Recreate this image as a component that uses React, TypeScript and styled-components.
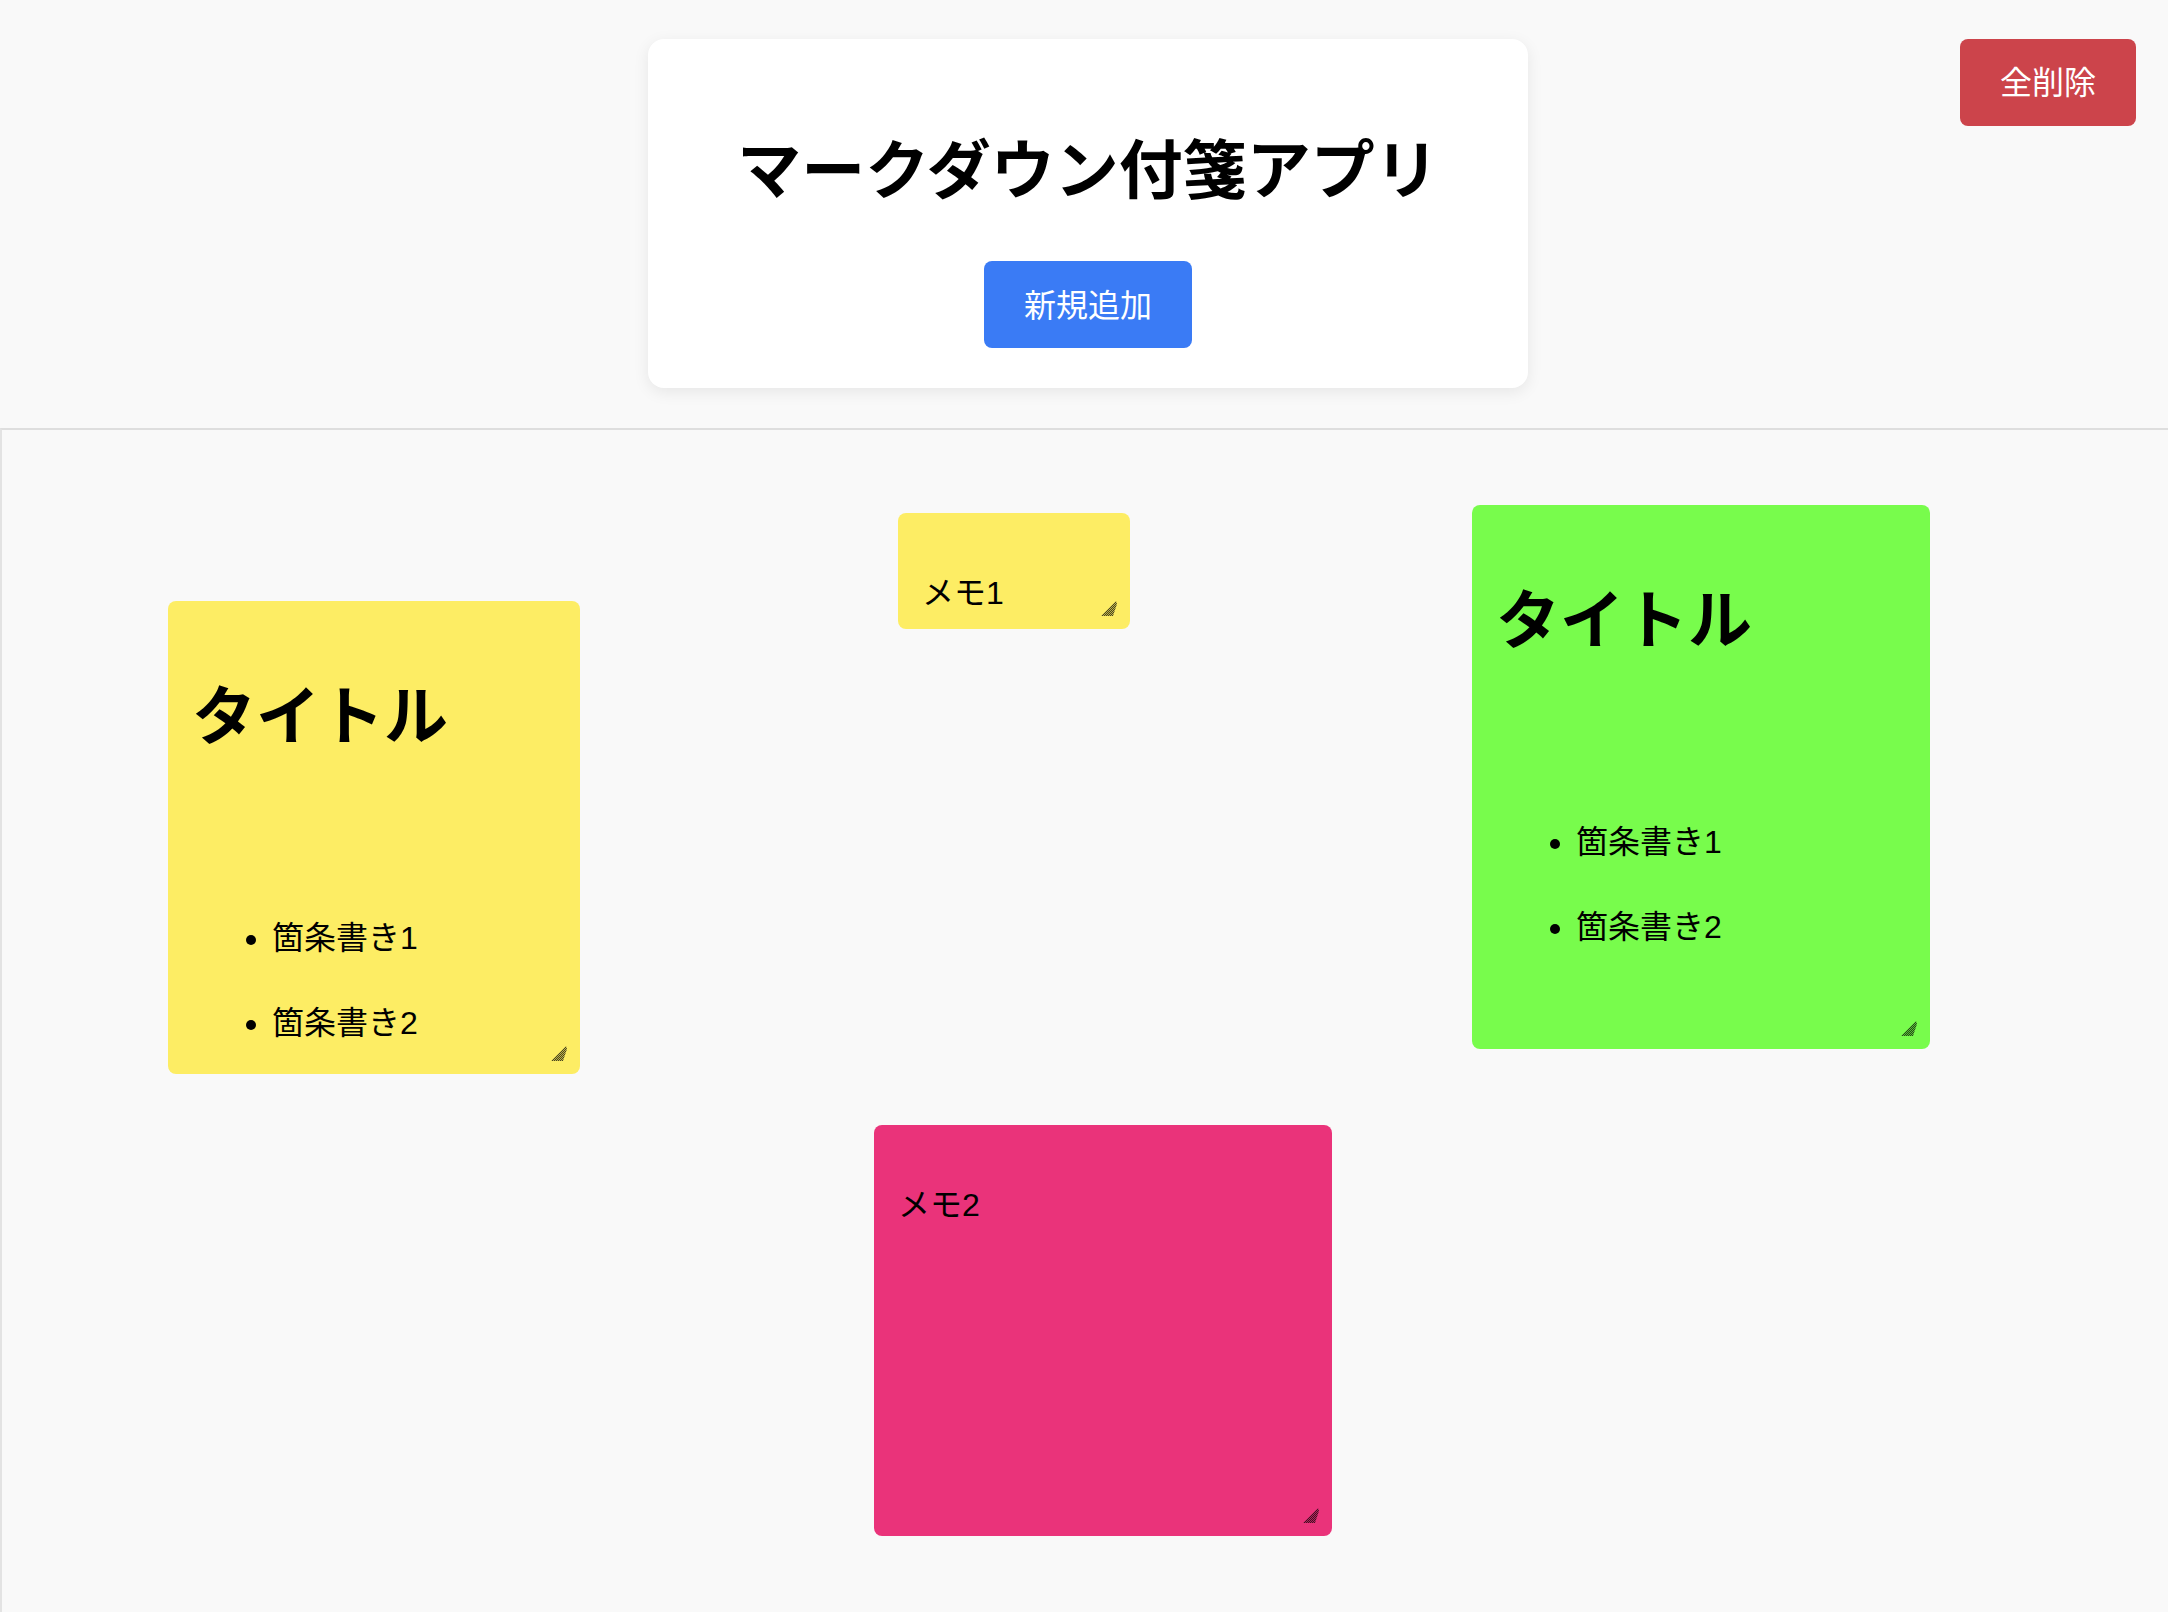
import React from "react";
import styled, { createGlobalStyle } from "styled-components";

const GlobalStyle = createGlobalStyle`
  html, body {
    margin: 0;
    padding: 0;
    background: #f9f9f9;
  }
  body {
    font-family: "Noto Sans CJK JP", "Noto Sans", sans-serif;
    color: #000;
    overflow: hidden;
  }
`;

const Page = styled.div`
  position: relative;
  min-height: 1612px;
  background: #f9f9f9;
`;

const HeaderRow = styled.header`
  display: flex;
  justify-content: center;
  padding: 39px 0 40px 8px;
`;

const HeaderCard = styled.div`
  width: 880px;
  box-sizing: border-box;
  padding: 40px;
  background: #ffffff;
  border-radius: 16px;
  box-shadow: 0 4px 16px rgba(0, 0, 0, 0.08);
  display: flex;
  flex-direction: column;
  align-items: center;
`;

const AppTitle = styled.h1`
  margin: 38px 0 48px;
  font-size: 64px;
  line-height: 96px;
  font-weight: 700;
  white-space: nowrap;
`;

const ActionButton = styled.button<{ $tone: "primary" | "danger" }>`
  border: none;
  border-radius: 8px;
  padding: 19px 40px 21px;
  font-family: "Noto Sans CJK JP", "Noto Sans", sans-serif;
  font-size: 32px;
  line-height: 47px;
  color: #ffffff;
  background: ${(p) => (p.$tone === "primary" ? "#3a7bf5" : "#cc444b")};
  cursor: pointer;
`;

const ClearButton = styled(ActionButton)`
  position: absolute;
  top: 39px;
  right: 32px;
  padding: 18px 40px 22px;
`;

const Board = styled.main`
  position: relative;
  height: 1300px;
  border-top: 2px solid #dedede;
  border-left: 2px solid #e3e3e3;
  background: #f9f9f9;
`;

const Note = styled.div<{ $bg: string }>`
  position: absolute;
  box-sizing: border-box;
  padding: 24px;
  background: ${(p) => p.$bg};
  border-radius: 8px;
  overflow: hidden;
  font-family: "Liberation Sans", "Noto Sans CJK JP", sans-serif;
`;

const NoteTitle = styled.h1`
  margin: 44px 0 0;
  font-size: 64px;
  line-height: 96px;
  font-weight: 700;
`;

const NoteList = styled.ul`
  margin: 149px 0 0;
  padding-left: 80px;
  list-style: disc;
`;

const NoteItem = styled.li`
  font-size: 32px;
  line-height: 48px;
  & + & {
    margin-top: 37px;
  }
`;

const NoteText = styled.p`
  margin: 32px 0;
  font-size: 32px;
  line-height: 48px;
`;

const Grip = styled.svg`
  position: absolute;
  right: 13px;
  bottom: 13px;
  width: 16px;
  height: 16px;
`;

const ResizeGrip = () => (
  <Grip viewBox="0 0 16 16">
    <defs>
      <pattern id="chk" width="2" height="2" patternUnits="userSpaceOnUse">
        <rect width="2" height="2" fill="rgba(0,0,0,0.25)" />
        <rect width="1" height="1" fill="rgba(0,0,0,0.6)" />
        <rect x="1" y="1" width="1" height="1" fill="rgba(0,0,0,0.6)" />
      </pattern>
    </defs>
    <path d="M0 16 L15 1 L16 4 L12 16 Z" fill="url(#chk)" />
  </Grip>
);

type NoteData =
  | { id: number; kind: "md"; x: number; y: number; w: number; h: number; bg: string }
  | { id: number; kind: "text"; x: number; y: number; w: number; h: number; bg: string; text: string };

const notes: NoteData[] = [
  { id: 1, kind: "md", x: 166, y: 171, w: 412, h: 473, bg: "#fded64" },
  { id: 2, kind: "text", x: 896, y: 83, w: 232, h: 116, bg: "#fded64", text: "メモ1" },
  { id: 3, kind: "md", x: 1470, y: 75, w: 458, h: 544, bg: "#78fc4c" },
  { id: 4, kind: "text", x: 872, y: 695, w: 458, h: 411, bg: "#ea337a", text: "メモ2" },
];

export default function App() {
  return (
    <Page>
      <GlobalStyle />
      <HeaderRow>
        <HeaderCard>
          <AppTitle>マークダウン付箋アプリ</AppTitle>
          <ActionButton $tone="primary">新規追加</ActionButton>
        </HeaderCard>
      </HeaderRow>
      <ClearButton $tone="danger">全削除</ClearButton>
      <Board>
        {notes.map((n) => (
          <Note
            key={n.id}
            $bg={n.bg}
            style={{ left: n.x, top: n.y, width: n.w, height: n.h }}
          >
            {n.kind === "md" ? (
              <>
                <NoteTitle>タイトル</NoteTitle>
                <NoteList>
                  <NoteItem>箇条書き1</NoteItem>
                  <NoteItem>箇条書き2</NoteItem>
                </NoteList>
              </>
            ) : (
              <NoteText>{n.text}</NoteText>
            )}
            <ResizeGrip />
          </Note>
        ))}
      </Board>
    </Page>
  );
}
